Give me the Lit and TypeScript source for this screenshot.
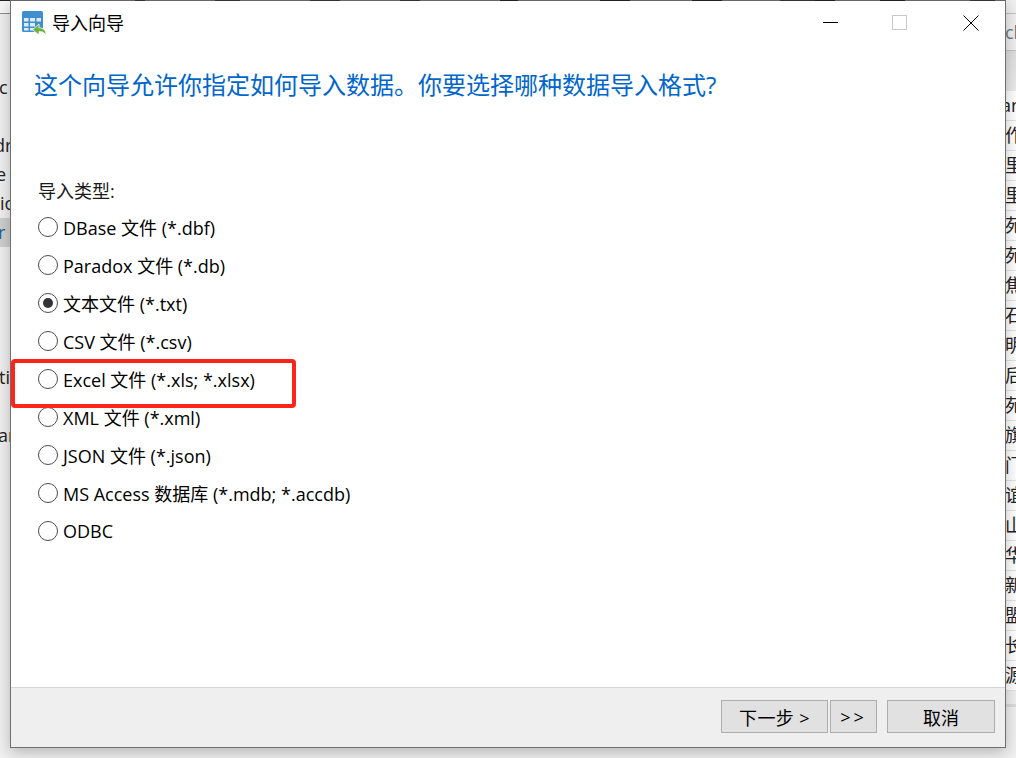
import { css, html, LitElement } from "lit";
import { customElement } from "lit/decorators.js";

interface SideItem {
  text: string;
  offset?: number;
  selected?: boolean;
}

const FORMATS = [
  "DBase 文件 (*.dbf)",
  "Paradox 文件 (*.db)",
  "文本文件 (*.txt)",
  "CSV 文件 (*.csv)",
  "Excel 文件 (*.xls; *.xlsx)",
  "XML 文件 (*.xml)",
  "JSON 文件 (*.json)",
  "MS Access 数据库 (*.mdb; *.accdb)",
  "ODBC",
];

// fragments of the table behind the dialog, pitch is one row
const LEFT_ROWS: SideItem[] = [
  { text: "c", offset: -1 },
  { text: "" },
  { text: "dr", offset: -6 },
  { text: "e", offset: -4 },
  { text: "io" },
  { text: "r", offset: -2, selected: true },
  { text: "" },
  { text: "" },
  { text: "" },
  { text: "" },
  { text: "tic", offset: -1 },
  { text: "" },
  { text: "ar", offset: -2 },
];

const RIGHT_ROWS = [
  "an",
  "作",
  "里",
  "里",
  "苑",
  "苑",
  "焦",
  "石",
  "明",
  "后",
  "苑",
  "旗",
  "门",
  "谊",
  "山",
  "华",
  "新",
  "盟",
  "长",
  "源",
];

@customElement("app-root")
export class AppRoot extends LitElement {
  render() {
    return html`
      <div class="desktop">
        <div class="left-pane">
          <div class="left-head"></div>
          ${LEFT_ROWS.map(
            (row) =>
              html`<div class="left-row ${row.selected ? "selected" : ""}">
                <span style="margin-left:${row.offset ?? 0}px">${row.text}</span>
              </div>`
          )}
        </div>
        <div class="right-pane">
          <div class="right-head">ch</div>
          <div class="right-gap"></div>
          ${RIGHT_ROWS.map(
            (row, i) =>
              html`<div class="right-row">
                <span style="margin-left:${i === 0 ? -4 : 0}px">${row}</span>
              </div>`
          )}
          <div class="right-end"></div>
        </div>

        <section class="dialog">
          <header class="titlebar">
            <svg class="app-icon" width="24" height="24" viewBox="0 0 24 24">
              <rect x="0" y="0" width="21" height="21" rx="1.500" fill="#3f8fd0" />
              <path
                d="M2 7h4.500v3.500H2zM8 7h5v3.500H8zM14.500 7H19v3.500h-4.500zM2 12h4.500v3.500H2zM8 12h5v3.500H8zM2 17h4.500v2.500H2zM8 17h5v2.500H8z"
                fill="#dfecf7"
              />
              <path
                d="M24 24c.2-4.800-3-7.400-7-7.200V13l-6.500 5.800 6.500 5.200v-3.500c3-.2 5.200 1 7 3.500z"
                fill="#6cb33f"
                stroke="#fff"
                stroke-width=".8"
              />
            </svg>
            <span class="title">导入向导</span>
            <div class="window-controls">
              <svg class="min" width="16" height="16" viewBox="0 0 16 16">
                <path d="M0 7.500h15" stroke="#000" fill="none" />
              </svg>
              <svg width="16" height="16" viewBox="0 0 16 16">
                <rect x=".5" y=".5" width="14" height="14" stroke="#c8c8c8" fill="none" />
              </svg>
              <svg width="16" height="16" viewBox="0 0 16 16">
                <path d="M.5 .5l15 15M15.500 .5l-15 15" stroke="#000" fill="none" />
              </svg>
            </div>
          </header>

          <main class="body">
            <h1>这个向导允许你指定如何导入数据。你要选择哪种数据导入格式?</h1>
            <div class="group-label">导入类型:</div>
            <div class="options">
              ${FORMATS.map(
                (label, i) => html`
                  <div class="option">
                    <span class="radio ${i === 2 ? "checked" : ""}"></span>
                    <span>${label}</span>
                  </div>
                `
              )}
            </div>
            <div class="highlight"></div>
          </main>

          <footer class="footer">
            <button class="next">下一步 &gt;</button>
            <button class="skip">&gt;&gt;</button>
            <button class="cancel">取消</button>
          </footer>
        </section>

        <div class="top-edge"></div>
      </div>
    `;
  }

  static styles = css`
    :host {
      display: block;
      font-family: "Open Sans", "Noto Sans CJK SC", sans-serif;
    }

    .desktop {
      position: relative;
      width: 1016px;
      height: 758px;
      overflow: hidden;
      background: #f0f0f0;
      display: flex;
      justify-content: space-between;
    }

    .left-pane {
      width: 10px;
      font-size: 18px;
      color: #222;
      white-space: nowrap;
      overflow: hidden;
    }

    .left-head {
      height: 13px;
      margin-bottom: 59px;
      background: #f7f7f7;
      border-bottom: 1px solid #8c8c8c;
    }

    .left-row {
      height: 29px;
      line-height: 29px;
      overflow: hidden;
    }

    .left-row.selected {
      background: #cfcfcf;
      color: #1f5f99;
    }

    .right-pane {
      width: 11px;
      font-size: 18px;
      color: #222;
      white-space: nowrap;
      overflow: hidden;
    }

    .right-head {
      height: 36px;
      margin-top: 13px;
      border-top: 1px solid #c4c4c4;
      border-bottom: 1px solid #c4c4c4;
      line-height: 36px;
      color: #6b7a88;
    }

    .right-gap {
      height: 40px;
      background: linear-gradient(#dedede, #ececec);
    }

    .right-row {
      height: 29px;
      line-height: 29px;
      background: #fff;
      border-bottom: 1px solid #e2e2e2;
    }

    .right-end {
      height: 3px;
      margin-top: 13px;
      background: #dcdcdc;
    }

    .dialog {
      position: absolute;
      left: 10px;
      top: 0;
      width: 996px;
      height: 748px;
      box-sizing: border-box;
      display: flex;
      flex-direction: column;
      background: #fff;
      border: 1px solid #6f6f6f;
      box-shadow: 0 4px 14px rgba(0, 0, 0, 0.25);
    }

    /* dark bits of the row behind show through along the window's top edge */
    .top-edge {
      position: absolute;
      left: 0;
      top: 0;
      width: 1006px;
      height: 1px;
      background: linear-gradient(
        90deg,
        #222 0 10px,
        #666 10px 135px,
        #333 135px 145px,
        #666 145px 215px,
        #333 215px 240px,
        #666 240px 310px,
        #333 310px 340px,
        #666 340px 400px,
        #333 400px 420px,
        #666 420px 500px,
        #222 500px 518px,
        #666 518px 600px,
        #222 600px 630px,
        #666 630px 692px,
        #222 692px 722px,
        #666 722px 780px,
        #333 780px 815px,
        #222 815px 835px,
        #666 835px 880px,
        #222 880px 905px,
        #666 905px 970px,
        #333 970px 995px,
        #666 995px
      );
    }

    .titlebar {
      height: 44px;
      flex: none;
      display: flex;
      align-items: center;
      padding-left: 11px;
    }

    .app-icon {
      margin-right: 6px;
    }

    .title {
      font-size: 18px;
      color: #000;
      margin-bottom: 2px;
    }

    .window-controls {
      margin-left: auto;
      display: flex;
      gap: 55px;
      padding-right: 26px;
    }

    .window-controls .min {
      margin-right: -2px;
    }

    .body {
      position: relative;
      flex: 1;
      padding: 0 22px;
    }

    h1 {
      margin: 20px 0 0 1px;
      font-size: 24px;
      font-weight: 400;
      line-height: 40px;
      color: #0066cc;
    }

    .group-label {
      margin: 74px 0 0 5px;
      font-size: 18px;
      line-height: 24px;
      color: #1a1a1a;
    }

    .options {
      margin: 5px 0 0 5px;
      display: flex;
      flex-direction: column;
    }

    .option {
      height: 38px;
      display: flex;
      align-items: center;
      gap: 5px;
      font-size: 18px;
      color: #000;
    }

    .radio {
      width: 20px;
      height: 20px;
      box-sizing: border-box;
      border: 1px solid #4d4d4d;
      border-radius: 50%;
      background: #fff;
      display: flex;
      align-items: center;
      justify-content: center;
    }

    .radio.checked::after {
      content: "";
      width: 10px;
      height: 10px;
      border-radius: 50%;
      background: #333;
    }

    .highlight {
      position: absolute;
      left: 0;
      top: 314px;
      width: 285px;
      height: 49px;
      box-sizing: border-box;
      border: 4px solid #ff2419;
      border-radius: 4px;
    }

    .footer {
      height: 60px;
      flex: none;
      box-sizing: border-box;
      display: flex;
      align-items: center;
      justify-content: flex-end;
      padding: 0 10px 2px 0;
      background: #efefef;
      border-top: 1px solid #d4d4d4;
    }

    button {
      height: 33px;
      padding: 0;
      font: inherit;
      font-size: 18px;
      color: #000;
      background: #e1e1e1;
      border: 1px solid #adadad;
    }

    .next {
      width: 107px;
      letter-spacing: 0.4px;
    }

    .skip {
      width: 47px;
      margin-left: 2px;
      letter-spacing: 3px;
    }

    .cancel {
      width: 108px;
      margin-left: 10px;
    }
  `;
}
